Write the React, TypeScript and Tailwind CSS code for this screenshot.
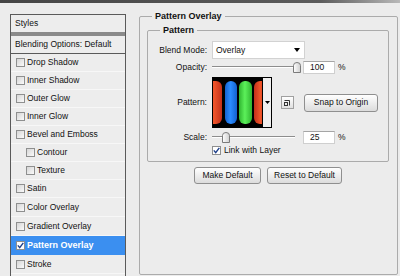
type Item = { name: string; indent?: boolean; checked?: boolean; selected?: boolean; tall?: boolean }

const items: Item[] = [
  { name: 'Drop Shadow' },
  { name: 'Inner Shadow' },
  { name: 'Outer Glow' },
  { name: 'Inner Glow' },
  { name: 'Bevel and Emboss' },
  { name: 'Contour', indent: true },
  { name: 'Texture', indent: true },
  { name: 'Satin' },
  { name: 'Color Overlay', tall: true },
  { name: 'Gradient Overlay', tall: true },
  { name: 'Pattern Overlay', checked: true, selected: true, tall: true },
  { name: 'Stroke', tall: true },
]

function CheckBox({ checked }: { checked?: boolean }) {
  return (
    <span
      className={`flex h-[9px] w-[9px] shrink-0 items-center justify-center border border-[#8e8f8f] ${
        checked ? 'bg-white' : 'bg-gradient-to-br from-[#d6d6d6] to-[#fafafa]'
      }`}
    >
      {checked && (
        <svg width="7" height="7" viewBox="0 0 7 7">
          <path d="M0.8 3.4 L2.7 5.6 L6.3 0.8" fill="none" stroke="#1d3f8a" strokeWidth="1.4" />
        </svg>
      )}
    </span>
  )
}

function Slider({ pos }: { pos: number }) {
  return (
    <div className="relative h-[14px] w-[83px]">
      <div className="absolute left-0 right-0 top-[6px] h-[2px] border-t border-b border-t-[#8d8d8d] border-b-white" />
      {/* thumb */}
      <svg className="absolute top-[2px]" style={{ left: pos }} width="8" height="11" viewBox="0 0 8 11">
        <defs>
          <linearGradient id={`th${pos}`} x1="0" y1="0" x2="1" y2="0">
            <stop offset="0" stopColor="#ffffff" />
            <stop offset="1" stopColor="#cfcfcf" />
          </linearGradient>
        </defs>
        <path d="M0.5 10.5 V3.5 Q0.5 0.5 4 0.5 Q7.5 0.5 7.5 3.5 V10.5 Z" fill={`url(#th${pos})`} stroke="#7b7b7b" />
      </svg>
    </div>
  )
}

function NumBox({ value }: { value: string }) {
  return (
    <div className="flex items-center">
      <div className="h-[13px] w-[32px] border border-[#cfcfcf] border-t-[#a5a5a5] bg-white pl-[6px] leading-[11px]">{value}</div>
      <span className="ml-[3px]">%</span>
    </div>
  )
}

function Button({ label, w }: { label: string; w: string }) {
  return (
    <div
      className={`flex h-[17px] items-center justify-center rounded-[3px] border border-[#8f8f8f] bg-gradient-to-b from-white to-[#dcdcdc] ${w}`}
    >
      {label}
    </div>
  )
}

function Pill({ x, w, id, c1, c2 }: { x: number; w: number; id: string; c1: string; c2: string }) {
  return (
    <>
      <defs>
        <linearGradient id={id} x1="0" y1="0" x2="1" y2="0">
          <stop offset="0" stopColor={c2} />
          <stop offset="0.45" stopColor={c1} />
          <stop offset="1" stopColor={c2} />
        </linearGradient>
      </defs>
      <rect x={x} y="3" width={w} height="43" rx="6" fill={`url(#${id})`} />
    </>
  )
}

export default function App() {
  return (
    <div className="h-[276px] w-[400px] overflow-hidden bg-[#ececec] font-['Liberation_Sans',Arial,sans-serif] text-[8.5px] leading-none text-[#111]">
      <div className="h-[3px] bg-gradient-to-r from-[#454545] via-[#5c5c5c] via-80% to-[#b9b9b9]" />

      <div className="flex items-start">
        {/* Styles list */}
        <div className="ml-[10px] mt-[11px] h-[300px] w-[116px] border border-[#5a5a5a] bg-[#ededed]">
          <div className="flex h-[17px] items-center pl-[4px]">Styles</div>
          <div className="h-[4px] bg-[#8a8a8a]" />
          <div className="flex h-[18px] items-center border-b border-[#5a5a5a] pl-[4px]">Blending Options: Default</div>
          {items.map(it => (
            <div
              key={it.name}
              className={`flex items-center border-b ${it.tall ? 'h-[19px]' : 'h-[18px]'} ${
                it.indent ? 'pl-[15px]' : 'pl-[5px]'
              } ${it.selected ? 'border-[#3b8ff0] bg-[#3b8ff0] font-bold text-white' : 'border-[#f7f7f7]'}`}
            >
              <CheckBox checked={it.checked} />
              <span className={`ml-[2px] ${it.selected ? 'text-[9px]' : ''}`}>{it.name}</span>
            </div>
          ))}
        </div>

        {/* Pattern Overlay */}
        <fieldset className="ml-[13px] mt-[8px] h-[264px] w-[259px] rounded-[2px] border border-[#ababab] pl-[7px] pr-[8px] pt-[3px]">
          <legend className="ml-[5px] px-[3px] text-[9px] font-bold leading-[11px]">Pattern Overlay</legend>

          <fieldset className="rounded-[2px] border border-[#ababab] pb-[5px]">
            <legend className="ml-[12px] px-[3px] text-[9px] font-bold leading-[11px]">Pattern</legend>

            <div className="mt-[5px] flex h-[18px] items-center">
              <span className="w-[59px] text-right">Blend Mode:</span>
              <div className="ml-[5px] flex h-[18px] w-[93px] items-center justify-between border border-[#d2d2d2] bg-white pl-[3px] pr-[4px]">
                <span>Overlay</span>
                <svg width="6" height="4" viewBox="0 0 6 4">
                  <path d="M0 0 H6 L3 4 Z" fill="#000" />
                </svg>
              </div>
            </div>

            <div className="mt-[1px] flex h-[14px] items-center">
              <span className="w-[59px] text-right">Opacity:</span>
              <div className="ml-[5px] flex items-center">
                <Slider pos={81} />
                <div className="ml-[8px]">
                  <NumBox value="100" />
                </div>
              </div>
            </div>

            <div className="mt-[3px] flex h-[51px] items-center">
              <span className="w-[59px] text-right">Pattern:</span>
              <div className="ml-[5px] flex h-[51px] w-[60px] border border-black">
                <svg width="49" height="49" viewBox="0 0 49 49">
                  <rect width="49" height="49" fill="#000" />
                  <Pill x={-6} w={15} id="p1" c1="#f0552a" c2="#c3301a" />
                  <Pill x={12} w={12} id="p2" c1="#2b8cff" c2="#1462d0" />
                  <Pill x={26} w={13} id="p3" c1="#5cf05a" c2="#2fb530" />
                  <Pill x={41} w={14} id="p4" c1="#f0552a" c2="#c3301a" />
                </svg>
                <div className="flex flex-1 items-center justify-center border-l border-black bg-[#efefef]">
                  <svg width="5" height="3" viewBox="0 0 5 3">
                    <path d="M0 0 H5 L2.5 3 Z" fill="#000" />
                  </svg>
                </div>
              </div>
              <div className="ml-[9px] flex h-[13px] w-[13px] items-center justify-center border border-[#a0a0a0] bg-gradient-to-b from-white to-[#e0e0e0]">
                <svg width="9" height="9" viewBox="0 0 9 9">
                  <path d="M1.5 2.5 H6.5 V7.5" fill="none" stroke="#333" />
                  <rect x="1.5" y="4.5" width="3" height="3" fill="none" stroke="#333" />
                </svg>
              </div>
              <div className="ml-[10px]">
                <Button label="Snap to Origin" w="w-[74px] h-[18px]" />
              </div>
            </div>

            <div className="mt-[2px] flex h-[14px] items-center">
              <span className="w-[59px] text-right">Scale:</span>
              <div className="ml-[5px] flex items-center">
                <Slider pos={10} />
                <div className="ml-[8px]">
                  <NumBox value="25" />
                </div>
              </div>
            </div>

            <div className="ml-[64px] mt-[1px] flex h-[11px] items-center">
              <CheckBox checked />
              <span className="ml-[3px]">Link with Layer</span>
            </div>
          </fieldset>

          <div className="mt-[5px] flex justify-center gap-[6px]">
            <Button label="Make Default" w="w-[67px]" />
            <Button label="Reset to Default" w="w-[75px]" />
          </div>
        </fieldset>
      </div>
    </div>
  )
}
